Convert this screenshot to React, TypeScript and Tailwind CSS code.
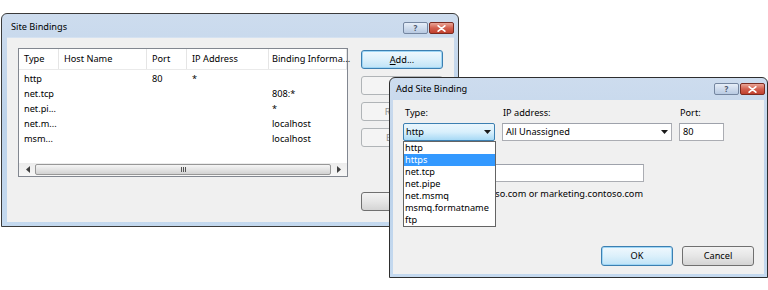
import React from 'react';

const rows = [
  { type: 'http', host: '', port: '80', ip: '*', info: '' },
  { type: 'net.tcp', host: '', port: '', ip: '', info: '808:*' },
  { type: 'net.pi...', host: '', port: '', ip: '', info: '*' },
  { type: 'net.m...', host: '', port: '', ip: '', info: 'localhost' },
  { type: 'msm...', host: '', port: '', ip: '', info: 'localhost' },
];

const typeOptions = ['http', 'https', 'net.tcp', 'net.pipe', 'net.msmq', 'msmq.formatname', 'ftp'];

function TitleButtons() {
  return (
    <div className="flex gap-[1px]">
      <div className="w-[25px] h-[12px] rounded-[2px] border border-[#7486a0] bg-gradient-to-b from-[#e6eef8] to-[#b8cae2] flex items-center justify-center">
        <span className="text-[8px] font-bold leading-none text-[#4a5668]">?</span>
      </div>
      <div className="w-[25px] h-[12px] rounded-[2px] border border-[#7a2b21] bg-gradient-to-b from-[#e9a597] via-[#d3604f] to-[#c0402e] flex items-center justify-center">
        <svg width="9" height="7" viewBox="0 0 9 7">
          <path d="M1.2 0.8 L7.8 6.2 M7.8 0.8 L1.2 6.2" stroke="white" strokeWidth="1.7" strokeLinecap="round" />
        </svg>
      </div>
    </div>
  );
}

function Button({
  label,
  variant = 'normal',
  className = '',
}: {
  label: React.ReactNode;
  variant?: 'normal' | 'default' | 'disabled';
  className?: string;
}) {
  const styles = {
    normal: 'border-[#707070] bg-gradient-to-b from-[#f3f3f3] via-[#e6e6e6] to-[#d4d4d4] text-black',
    default: 'border-[#3c7fb1] bg-gradient-to-b from-[#f0f8fd] via-[#dcf0fb] to-[#bfe3f7] text-black shadow-[inset_0_0_0_1px_#9fd6f5]',
    disabled: 'border-[#b0b4b7] bg-[#f4f4f4] text-[#8d8d8d]',
  };
  return (
    <div
      className={`h-[19px] rounded-[3px] border flex items-center justify-center ${styles[variant]} ${className}`}
    >
      {label}
    </div>
  );
}

function SiteBindingsList() {
  const cols = ['w-[40px]', 'w-[88px]', 'w-[40px]', 'w-[82px]', 'w-[78px]'];
  const heads = ['Type', 'Host Name', 'Port', 'IP Address', 'Binding Informa...'];
  return (
    <div className="w-[330px] h-[129px] border border-[#828790] bg-white flex flex-col">
      {/* Header */}
      <div className="h-[21px] flex border-b border-[#eaeaea]">
        {heads.map((h, i) => (
          <div
            key={h}
            className={`${cols[i]} ${i === 4 ? 'pl-[3px]' : 'pl-[5px]'} flex items-center border-r border-[#e5e5e5] whitespace-nowrap`}
          >
            {h}
          </div>
        ))}
      </div>

      {/* Rows */}
      <div className="flex-1 pt-[1px]">
        {rows.map((r) => (
          <div key={r.type} className="h-[15px] flex items-center">
            <div className={`${cols[0]} pl-[5px] whitespace-nowrap`}>{r.type}</div>
            <div className={`${cols[1]} pl-[5px]`}>{r.host}</div>
            <div className={`${cols[2]} pl-[5px]`}>{r.port}</div>
            <div className={`${cols[3]} pl-[5px]`}>{r.ip}</div>
            <div className={`${cols[4]} pl-[3px] whitespace-nowrap`}>{r.info}</div>
          </div>
        ))}
      </div>

      {/* Horizontal scrollbar */}
      <div className="h-[13px] flex items-center bg-gradient-to-b from-[#ececec] to-[#f7f7f7] px-[1px]">
        <div className="w-[15px] flex justify-center">
          <svg width="4" height="7" viewBox="0 0 4 7">
            <path d="M4 0 L0 3.5 L4 7 Z" fill="#404040" />
          </svg>
        </div>
        <div className="flex-1 h-[11px] rounded-[2px] border border-[#979797] bg-gradient-to-b from-[#f5f5f5] via-[#e4e4e4] to-[#d2d2d2] flex items-center justify-center">
          <div className="flex gap-[1px]">
            <div className="w-[1px] h-[5px] bg-[#555]" />
            <div className="w-[1px] h-[5px] bg-[#555]" />
            <div className="w-[1px] h-[5px] bg-[#555]" />
          </div>
        </div>
        <div className="w-[15px] flex justify-center">
          <svg width="4" height="7" viewBox="0 0 4 7">
            <path d="M0 0 L4 3.5 L0 7 Z" fill="#404040" />
          </svg>
        </div>
      </div>
    </div>
  );
}

function ComboArrow() {
  return (
    <svg width="7" height="4" viewBox="0 0 7 4">
      <path d="M0 0 L7 0 L3.5 4 Z" fill="#1a1a1a" />
    </svg>
  );
}

export default function App() {
  return (
    <div className="relative w-[768px] h-[290px] bg-white overflow-hidden font-['Noto_Sans',sans-serif] text-[9.2px] text-black leading-none">
      {/* Site Bindings window */}
      <div className="absolute left-[1px] top-[13px] w-[458px] h-[214px] border border-[#3b3b3b] rounded-t-[6px] bg-gradient-to-b from-[#cddcee] via-[#bcd2ea] to-[#c4d9ef] flex flex-col">
        <div className="h-[23px] flex items-start justify-between pl-[9px] pr-[4px]">
          <div className="pt-[8px] text-[9.2px]">Site Bindings</div>
          <div className="pt-[8px]">
            <TitleButtons />
          </div>
        </div>
        <div className="flex-1 ml-[5px] mr-[4px] mb-[4px] bg-[#f0f0f0] border-t border-[#d5e2f1] flex pt-[10px] pl-[11px] gap-[13px]">
          <SiteBindingsList />
          <div className="w-[82px] flex flex-col pt-[2px]">
            <Button label={<span><span className="underline">A</span>dd...</span>} variant="default" />
            <Button label="Edit..." variant="disabled" className="mt-[7px]" />
            <Button label="Remove" variant="disabled" className="mt-[7px]" />
            <Button label="Browse" variant="disabled" className="mt-[7px]" />
            <Button label="Close" className="mt-[45px]" />
          </div>
        </div>
      </div>

      {/* Add Site Binding window */}
      <div className="absolute left-[389px] top-[77px] w-[379px] h-[201px] border border-[#2e2e2e] rounded-t-[6px] bg-gradient-to-b from-[#cddcee] via-[#bcd2ea] to-[#c4d9ef] flex flex-col">
        <div className="h-[22px] flex items-start justify-between pl-[6px] pr-[2px]">
          <div className="pt-[6px] text-[9.2px]">Add Site Binding</div>
          <div className="pt-[5px]">
            <TitleButtons />
          </div>
        </div>
        <div className="flex-1 ml-[3px] mr-[3px] mb-[3px] bg-[#f0f0f0] flex flex-col pl-[10px] pr-[10px] pt-[7px]">
          <div className="flex gap-[7px]">
            <div className="w-[92px] flex flex-col">
              <div className="h-[12px] pl-[2px] mb-[4px] flex items-center">Type:</div>
              <div className="h-[18px] rounded-[2px] border border-[#3c7fb1] bg-gradient-to-b from-[#eaf6fd] via-[#d9f0fc] to-[#a7d9f5] flex items-center justify-between pl-[2px] pr-[3px]">
                <span>http</span>
                <ComboArrow />
              </div>
            </div>
            <div className="w-[170px] flex flex-col">
              <div className="h-[12px] pl-[1px] mb-[4px] flex items-center">IP address:</div>
              <div className="h-[18px] border border-[#abadb3] border-t-[#9ea2ab] bg-white flex items-center justify-between pl-[3px] pr-[3px]">
                <span>All Unassigned</span>
                <ComboArrow />
              </div>
            </div>
            <div className="w-[45px] flex flex-col">
              <div className="h-[12px] pl-[1px] mb-[4px] flex items-center">Port:</div>
              <div className="h-[18px] border border-[#abadb3] border-t-[#9ea2ab] bg-white flex items-center pl-[3px]">
                80
              </div>
            </div>
          </div>

          <div className="h-[12px] mt-[7px] pl-[2px] flex items-center">Host name:</div>
          <div className="w-[241px] h-[18px] mt-[4px] border border-[#abadb3] border-t-[#9ea2ab] bg-white" />
          <div className="mt-[6px] pl-[2px] h-[12px] flex items-center">
            Example: sales.contoso.com or marketing.contoso.com
          </div>

          <div className="mt-auto mb-[8px] flex justify-end gap-[9px]">
            <Button label="OK" variant="default" className="w-[72px] h-[20px]" />
            <Button label="Cancel" className="w-[72px] h-[20px]" />
          </div>
        </div>

        {/* Open Type dropdown list */}
        <div className="absolute left-[13px] top-[63px] w-[93px] h-[86px] border border-[#646464] bg-white flex flex-col">
          {typeOptions.map((o) => (
            <div
              key={o}
              className={`h-[12px] flex items-center pl-[1px] ${o === 'https' ? 'bg-[#3399ff] text-white' : ''}`}
            >
              {o}
            </div>
          ))}
        </div>
      </div>
    </div>
  );
}
